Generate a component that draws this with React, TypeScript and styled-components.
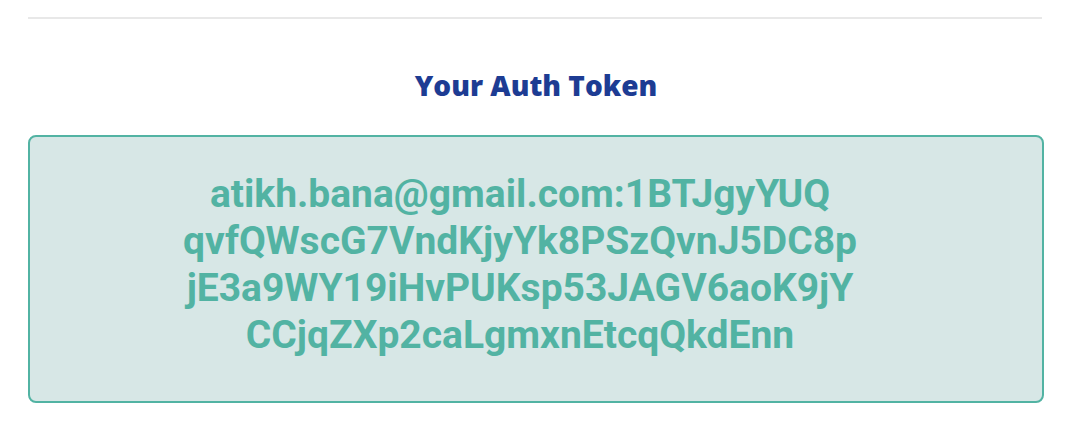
import React from "react";
import styled, { createGlobalStyle } from "styled-components";

const GlobalStyle = createGlobalStyle`
  html, body {
    margin: 0;
    padding: 0;
    background: #ffffff;
  }
  body {
    font-family: "Roboto", "Liberation Sans", sans-serif;
  }
`;

const Page = styled.main`
  width: 1072px;
  box-sizing: border-box;
  padding: 17px 28px 0 28px;
  display: flex;
  flex-direction: column;
`;

const Divider = styled.hr`
  margin: 0;
  border: none;
  height: 2px;
  width: 1014px;
  background: #e8e8e8;
`;

const Title = styled.h2`
  margin: 49px 0 0 0;
  text-align: center;
  font-family: "Open Sans", "Noto Sans", sans-serif;
  font-weight: 800;
  font-size: 28px;
  line-height: 34px;
  color: #1d3c93;
`;

const TokenBox = styled.section`
  margin-top: 33px;
  width: 1016px;
  box-sizing: border-box;
  border: 2px solid #52b3a3;
  border-radius: 8px;
  background: #d7e7e6;
  padding: 34px 32px 42px 0;
  display: flex;
  flex-direction: column;
  align-items: center;
`;

const TokenLine = styled.span`
  display: block;
  font-family: "Roboto", "Liberation Sans", sans-serif;
  font-weight: 700;
  font-size: 39px;
  line-height: 47px;
  color: #52b3a3;
  text-align: center;
  white-space: nowrap;
`;

const tokenLines = [
  "atikh.bana@gmail.com:1BTJgyYUQ",
  "qvfQWscG7VndKjyYk8PSzQvnJ5DC8p",
  "jE3a9WY19iHvPUKsp53JAGV6aoK9jY",
  "CCjqZXp2caLgmxnEtcqQkdEnn",
];

export default function App() {
  return (
    <>
      <GlobalStyle />
      <Page>
        <Divider />
        <Title>Your Auth Token</Title>
        <TokenBox>
          {tokenLines.map((line) => (
            <TokenLine key={line}>{line}</TokenLine>
          ))}
        </TokenBox>
      </Page>
    </>
  );
}
